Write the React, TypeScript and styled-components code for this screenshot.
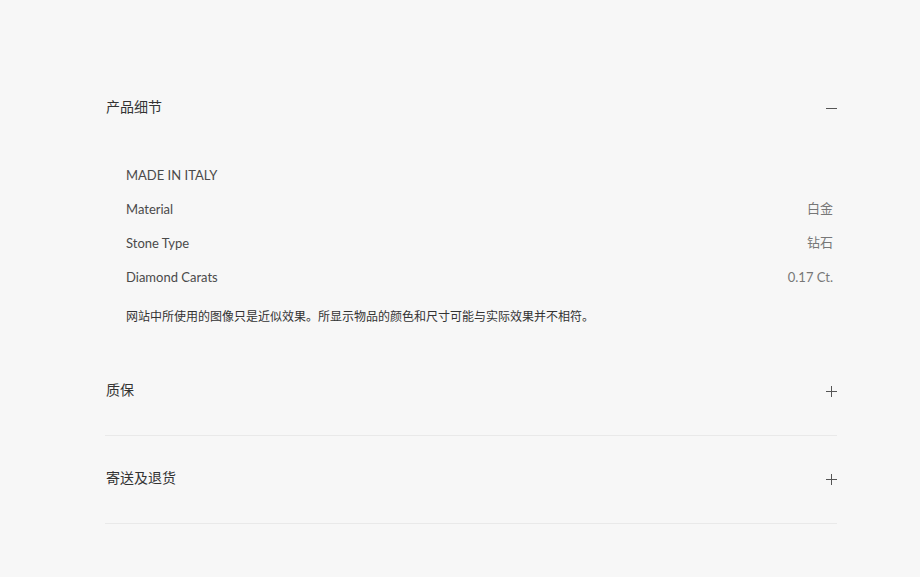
import React from "react";
import styled, { createGlobalStyle } from "styled-components";

const Global = createGlobalStyle`
  html { background: #f7f7f7; }
  body {
    margin: 0;
    background: #f7f7f7;
    font-family: Lato, "Noto Sans CJK SC", sans-serif;
    color: #333;
  }
  ::-webkit-scrollbar { width: 6px; }
  ::-webkit-scrollbar-track { background: #ececec; }
  ::-webkit-scrollbar-thumb { background: #000; }
`;

const Page = styled.div`
  padding: 65px 0 1430px 105px;
`;

const Accordion = styled.div`
  width: 732px;
`;

const Section = styled.section<{ $divider?: boolean }>`
  border-bottom: ${(p) => (p.$divider ? "1px solid #e9e9e9" : "none")};
`;

const Header = styled.div`
  box-sizing: border-box;
  height: 87px;
  padding-left: 1px;
  display: flex;
  align-items: center;
  justify-content: space-between;
  font-size: 14px;
  color: #333;
`;

const Title = styled.span`
  line-height: 20px;
  padding-bottom: 3px;
`;

const Toggle = styled.span`
  position: relative;
  width: 11px;
  height: 11px;
  display: inline-block;
`;

const Bar = styled.span<{ $vertical?: boolean }>`
  position: absolute;
  background: #555;
  ${(p) =>
    p.$vertical
      ? "left: 5px; top: 0; width: 1px; height: 11px;"
      : "left: 0; top: 5px; width: 11px; height: 1px;"}
`;

const Body = styled.div`
  padding: 6px 4px 20px 21px;
`;

const Row = styled.div`
  height: 34px;
  display: flex;
  align-items: center;
  justify-content: space-between;
  font-size: 13px;
`;

const Label = styled.span`
  color: #4a4a4a;
`;

const Value = styled.span<{ $cjk?: boolean }>`
  color: #777;
  line-height: 16px;
  padding-bottom: ${(p) => (p.$cjk ? "3px" : "0")};
`;

const Note = styled.p`
  margin: 12px 0 0;
  font-size: 12px;
  line-height: 22px;
  color: #333;
`;

const Icon = ({ open }: { open: boolean }) => (
  <Toggle>
    <Bar />
    {!open && <Bar $vertical />}
  </Toggle>
);

const specs = [
  { label: "MADE IN ITALY", value: "", cjk: false },
  { label: "Material", value: "白金", cjk: true },
  { label: "Stone Type", value: "钻石", cjk: true },
  { label: "Diamond Carats", value: "0.17 Ct.", cjk: false },
];

export default function App() {
  return (
    <>
      <Global />
      <Page>
        <Accordion>
          <Section>
            <Header>
              <Title>产品细节</Title>
              <Icon open />
            </Header>
            <Body>
              {specs.map((s) => (
                <Row key={s.label}>
                  <Label>{s.label}</Label>
                  <Value $cjk={s.cjk}>{s.value}</Value>
                </Row>
              ))}
              <Note>网站中所使用的图像只是近似效果。所显示物品的颜色和尺寸可能与实际效果并不相符。</Note>
            </Body>
          </Section>
          <Section $divider>
            <Header>
              <Title>质保</Title>
              <Icon open={false} />
            </Header>
          </Section>
          <Section $divider>
            <Header>
              <Title>寄送及退货</Title>
              <Icon open={false} />
            </Header>
          </Section>
        </Accordion>
      </Page>
    </>
  );
}
